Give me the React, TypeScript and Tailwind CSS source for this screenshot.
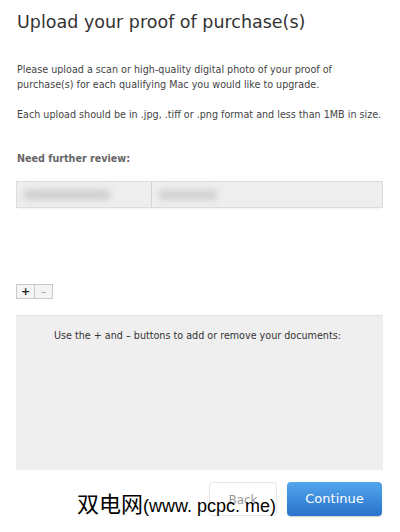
import React from "react";

export default function App() {
  return (
    <div className="relative w-[400px] h-[532px] bg-white overflow-hidden" style={{ fontFamily: '"DejaVu Sans", "Liberation Sans", sans-serif' }}>
      <div className="pl-[17px] pr-[10px]">
        <h1 className="pt-[10px] text-[17.5px] leading-[24px] text-[#333]">Upload your proof of purchase(s)</h1>
        <p className="mt-[28px] text-[9.6px] leading-[15px] text-[#444]">
          Please upload a scan or high-quality digital photo of your proof of<br />
          purchase(s) for each qualifying Mac you would like to upgrade.
        </p>
        <p className="mt-[15px] text-[9.6px] leading-[15px] text-[#444] whitespace-nowrap">
          Each upload should be in .jpg, .tiff or .png format and less than 1MB in size.
        </p>
        <p className="mt-[29px] text-[9.6px] leading-[15px] font-bold text-[#666]">Need further review:</p>
      </div>
      <div className="ml-[16px] mt-[15px] w-[367px] h-[27px] flex border border-[#dcdcdc] bg-[#eeeeee] shadow-[0_3px_2px_-2px_rgba(0,0,0,0.06)]">
        <div className="w-[135px] h-full border-r border-[#d4d4d4] flex items-center px-[6px]">
          <div className="w-[88px] h-[10px] rounded-full bg-[#cfcfcf] blur-[3px]" />
        </div>
        <div className="flex-1 flex items-center px-[6px]">
          <div className="w-[60px] h-[10px] rounded-full bg-[#d2d2d2] blur-[3px]" />
        </div>
      </div>
      <div className="ml-[16px] mt-[76px] flex w-[37px] h-[15px] border border-[#c8c8c8] bg-[#f4f4f4]">
        <div className="w-[18px] h-full flex items-center justify-center border-r border-[#c8c8c8] text-[11px] leading-none font-bold text-[#222]">+</div>
        <div className="flex-1 h-full flex items-center justify-center text-[10px] leading-none text-[#999]">–</div>
      </div>
      <div className="ml-[16px] mt-[16px] w-[367px] h-[155px] bg-[#efefef] border-t border-[#e2e2e2]">
        <p className="pt-[12px] pl-[38px] text-[9.6px] leading-[15px] text-[#333] whitespace-nowrap">
          Use the + and – buttons to add or remove your documents:
        </p>
      </div>
      <div className="mt-[12px] flex justify-end pr-[18px] gap-[10px]">
        <div className="w-[68px] h-[34px] rounded-[4px] border border-[#e6e6e6] bg-white flex items-start justify-center pt-[8px] text-[12px] text-[#999]">Back</div>
        <div className="w-[95px] h-[34px] rounded-[4px] bg-gradient-to-b from-[#52a6ec] to-[#2a73cc] flex items-center justify-center text-[13px] text-white shadow-[0_1px_1px_rgba(0,0,0,0.2)]">Continue</div>
      </div>
      <div className="absolute left-[77px] top-[488px] flex items-baseline leading-[28px] text-black">
        <span className="text-[22px]" style={{ fontFamily: '"Noto Sans CJK SC", sans-serif' }}>双电网</span>
        <span className="text-[18px]" style={{ fontFamily: '"Liberation Sans", sans-serif' }}>(www. pcpc. me)</span>
      </div>
    </div>
  );
}
